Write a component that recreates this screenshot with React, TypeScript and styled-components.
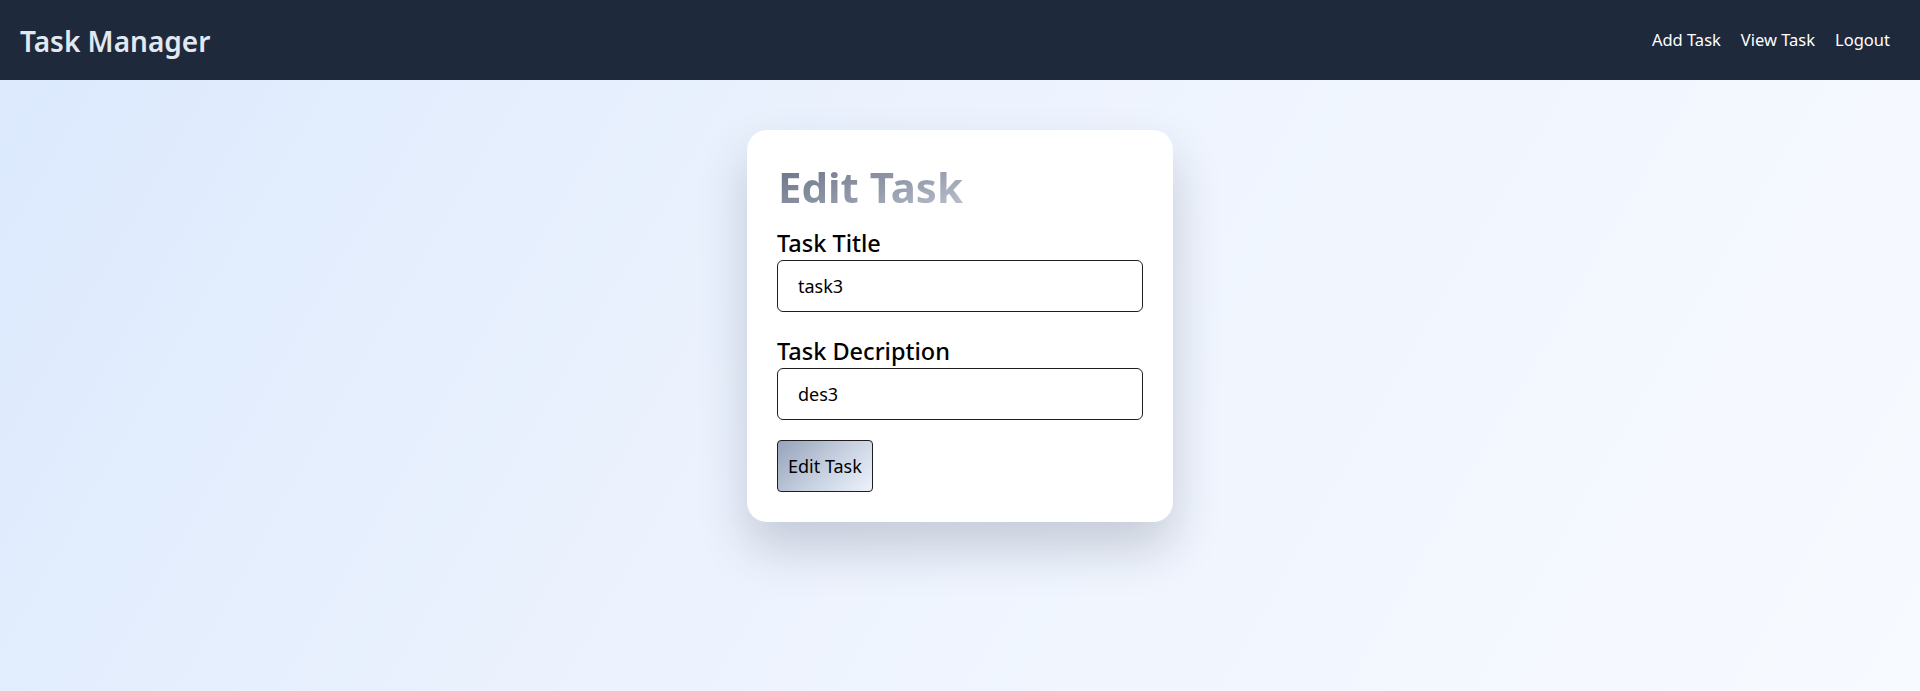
import React from "react";
import styled, { createGlobalStyle } from "styled-components";

const GlobalStyle = createGlobalStyle`
  html, body {
    margin: 0;
    padding: 0;
    height: 100%;
  }
  body {
    font-family: "Noto Sans", "Open Sans", sans-serif;
  }
  #root {
    min-height: 100vh;
    display: flex;
    flex-direction: column;
  }
  * { box-sizing: border-box; }
`;

const Page = styled.div`
  flex: 1;
  display: flex;
  flex-direction: column;
  background: linear-gradient(120deg, #dbe9fd 0%, #edf3fe 45%, #f7faff 100%);
`;

const NavBar = styled.nav`
  height: 80px;
  background: #1e293b;
  display: flex;
  align-items: center;
  justify-content: space-between;
  padding: 0 30px 0 20px;
`;

const Brand = styled.div`
  color: #e2e8f0;
  font-size: 28px;
  font-weight: 600;
  line-height: 1;
  padding-top: 2px;
`;

const NavLinks = styled.div`
  display: flex;
  gap: 20px;
`;

const NavLink = styled.a`
  color: #ffffff;
  font-size: 16.5px;
  text-decoration: none;
  line-height: 1;
  cursor: pointer;
`;

const Main = styled.main`
  flex: 1;
  display: flex;
  justify-content: center;
  align-items: flex-start;
  padding-top: 50px;
`;

const Card = styled.div`
  width: 426px;
  background: #ffffff;
  border-radius: 20px;
  padding: 30px;
  box-shadow: 0 26px 50px rgba(30, 41, 59, 0.2);
  display: flex;
  flex-direction: column;
  align-items: flex-start;
`;

const Title = styled.h1`
  margin: 2px 0 16px 1px;
  font-size: 42px;
  line-height: 50px;
  font-weight: 700;
  background: linear-gradient(160deg, #697083 0%, #939aaa 55%, #bfc5d1 100%);
  -webkit-background-clip: text;
  background-clip: text;
  color: transparent;
`;

const Field = styled.div<{ $last?: boolean }>`
  width: 100%;
  display: flex;
  flex-direction: column;
  margin-bottom: ${(p) => (p.$last ? "20px" : "24px")};
`;

const Label = styled.label`
  font-size: 23.5px;
  font-weight: 500;
  line-height: 30px;
  color: #000;
  margin-bottom: 2px;
`;

const Input = styled.input`
  width: 100%;
  height: 52px;
  border: 1px solid #1f1f1f;
  border-radius: 6px;
  padding: 0 20px;
  font-family: "Noto Sans", "Open Sans", sans-serif;
  font-size: 18px;
  color: #000;
  background: #fff;
  outline: none;
`;

const Button = styled.button`
  height: 52px;
  padding: 0 10px;
  border: 1px solid #1f1f1f;
  border-radius: 4px;
  background: linear-gradient(135deg, #97a3ba 0%, #c4cede 50%, #ecf2fc 100%);
  font-family: "Noto Sans", "Open Sans", sans-serif;
  font-size: 18px;
  color: #000;
  cursor: pointer;
`;

export default function App() {
  return (
    <>
      <GlobalStyle />
      <Page>
        <NavBar>
          <Brand>Task Manager</Brand>
          <NavLinks>
            <NavLink>Add Task</NavLink>
            <NavLink>View Task</NavLink>
            <NavLink>Logout</NavLink>
          </NavLinks>
        </NavBar>
        <Main>
          <Card>
            <Title>Edit Task</Title>
            <Field>
              <Label>Task Title</Label>
              <Input defaultValue="task3" />
            </Field>
            <Field $last>
              <Label>Task Decription</Label>
              <Input defaultValue="des3" />
            </Field>
            <Button>Edit Task</Button>
          </Card>
        </Main>
      </Page>
    </>
  );
}
